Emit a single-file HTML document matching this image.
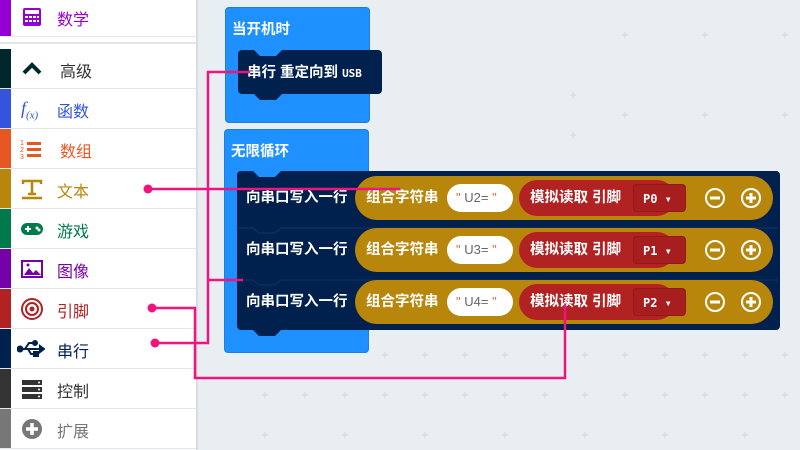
<!DOCTYPE html>
<html><head><meta charset="utf-8"><style>
*{margin:0;padding:0;box-sizing:border-box}
body{width:800px;height:450px;overflow:hidden;position:relative;background:#e9eef2;font-family:"Liberation Sans","Noto Sans CJK SC",sans-serif}
#side{position:absolute;left:0;top:0;width:198px;height:450px;background:#fff;border-right:2px solid #d9dde0}
.row{position:absolute;left:0;width:196px;height:40px;border-bottom:1px solid #e4e7ea;font-size:16px}
.row .c{position:absolute;left:0;top:0;width:11px;height:100%}
.row .t{position:absolute;left:57px;top:9px}
.row .i{position:absolute;left:20px;top:8px;width:24px;height:24px}
.b{position:absolute;color:#fff;font-weight:bold;font-size:14.5px;line-height:18px}
.blue{background:#1e90ff;border-radius:4px;border:1px solid #1a7fe0}
.pill{position:absolute;border-radius:22px}
.y{background:#b8860b}
.r{background:#b22222}
.w{background:#fff;color:#666;font-weight:normal}
.dd{position:absolute;border:1px solid #8e1a1a;border-radius:4px;background:#a81e1e;width:53px;height:28px}
.mono{font-family:'DejaVu Sans Mono',monospace;font-size:12px}
</style></head><body>
<div id="side">
<div class="row" style="top:-3px;height:40px"><div class="c" style="background:#9400d3"></div>
<svg class="i" viewBox="0 0 24 24"><rect x="3" y="3" width="18" height="18" rx="2" fill="#9400d3"/><rect x="5" y="5" width="14" height="4" fill="#fff"/><g fill="#fff"><rect x="5" y="11" width="3" height="2"/><rect x="9" y="11" width="3" height="2"/><rect x="13" y="11" width="3" height="2"/><rect x="17" y="11" width="2" height="2"/><rect x="5" y="15" width="3" height="2"/><rect x="9" y="15" width="3" height="2"/><rect x="13" y="15" width="3" height="2"/><rect x="17" y="15" width="2" height="2"/></g></svg>
<span class="t" style="color:#9400d3">数学</span></div>
<div style="position:absolute;top:42px;left:0;width:196px;border-top:2px solid #e4e7ea"></div>
<div class="row" style="top:49px"><div class="c" style="background:#00272b"></div><svg class="i" viewBox="0 0 24 24"><path d="M4 16l8-8 8 8" stroke="#00272b" stroke-width="4" fill="none"/></svg><span class="t" style="color:#333;left:60px">高级</span></div>
<div class="row" style="top:89px"><div class="c" style="background:#3455db"></div><span style="position:absolute;left:21px;top:9px;color:#3455db;font-style:italic;font-family:'Liberation Serif',serif;font-size:18px">f<sub style="font-size:11px">(x)</sub></span><span class="t" style="color:#3455db">函数</span></div>
<div class="row" style="top:129px"><div class="c" style="background:#e65722"></div><svg class="i" viewBox="0 0 24 24"><g fill="#e65722"><text x="0" y="8" font-size="7" font-family="Liberation Sans">1</text><text x="0" y="15" font-size="7" font-family="Liberation Sans">2</text><text x="0" y="22" font-size="7" font-family="Liberation Sans">3</text><rect x="7" y="5" width="14" height="3"/><rect x="7" y="11" width="14" height="3"/><rect x="7" y="17" width="14" height="3"/></g></svg><span class="t" style="color:#e65722;left:60px">数组</span></div>
<div class="row" style="top:169px"><div class="c" style="background:#b8860b"></div><svg class="i" viewBox="0 0 24 24"><g stroke="#b8860b" stroke-width="2.5" fill="none"><path d="M3 7V4h18v3M12 4v13M8 17h8M2 21h20"/></g></svg><span class="t" style="color:#b8860b">文本</span></div>
<div class="row" style="top:209px"><div class="c" style="background:#007a4b"></div><svg class="i" viewBox="0 0 24 24"><rect x="1" y="6" width="22" height="12" rx="6" fill="#007a4b"/><circle cx="17" cy="11" r="1.5" fill="#fff"/><circle cx="19" cy="13" r="1.5" fill="#fff"/><rect x="5" y="11" width="6" height="2" fill="#fff"/><rect x="7" y="9" width="2" height="6" fill="#fff"/></svg><span class="t" style="color:#007a4b">游戏</span></div>
<div class="row" style="top:249px"><div class="c" style="background:#7600a8"></div><svg class="i" viewBox="0 0 24 24"><rect x="2" y="4" width="20" height="16" fill="none" stroke="#7600a8" stroke-width="2"/><path d="M4 18l5-7 4 5 3-3 5 5z" fill="#7600a8"/><circle cx="8" cy="8" r="1.5" fill="#7600a8"/></svg><span class="t" style="color:#7600a8">图像</span></div>
<div class="row" style="top:289px"><div class="c" style="background:#b22222"></div><svg class="i" viewBox="0 0 24 24"><g fill="none" stroke="#b22222" stroke-width="2"><circle cx="12" cy="12" r="10"/><circle cx="12" cy="12" r="6"/></g><circle cx="12" cy="12" r="2.5" fill="#b22222"/></svg><span class="t" style="color:#b22222">引脚</span></div>
<div class="row" style="top:329px"><div class="c" style="background:#002050"></div><svg class="i" viewBox="0 0 28 24" style="left:17px;width:28px"><g stroke="#002050" stroke-width="2" fill="#002050"><path d="M3 12h22"/><circle cx="3" cy="12" r="2.5"/><path d="M8 12l4-6h5M11 12l3 5h4" fill="none"/><circle cx="18" cy="6" r="2"/><rect x="17" y="15" width="4" height="4"/><path d="M23 9l4 3-4 3z"/></g></svg><span class="t" style="color:#002050">串行</span></div>
<div class="row" style="top:369px"><div class="c" style="background:#333"></div><svg class="i" viewBox="0 0 24 24"><g fill="#333"><rect x="2" y="3" width="20" height="5"/><rect x="2" y="10" width="20" height="5"/><rect x="2" y="17" width="20" height="5"/></g><g fill="#fff"><circle cx="19" cy="5.5" r="1"/><circle cx="19" cy="12.5" r="1"/><circle cx="19" cy="19.5" r="1"/></g></svg><span class="t" style="color:#333">控制</span></div>
<div class="row" style="top:409px"><div class="c" style="background:#777"></div><svg class="i" viewBox="0 0 24 24"><circle cx="12" cy="12" r="10" fill="#777"/><path d="M12 6v12M6 12h12" stroke="#fff" stroke-width="3.5"/></svg><span class="t" style="color:#777">扩展</span></div>
</div>

<svg style="position:absolute;left:200px;top:0" width="600" height="450"><g stroke="#d3d8dc" stroke-width="1">
<path d="M370 95h6M373 92v6M370 135h6M373 132v6M370 175h6M373 172v6"/>
<path d="M62 395h6M65 392v6M102 395h6M105 392v6M142 395h6M145 392v6M182 395h6M185 392v6M222 395h6M225 392v6M262 395h6M265 392v6M302 395h6M305 392v6M342 395h6M345 392v6M382 395h6M385 392v6M422 395h6M425 392v6M462 395h6M465 392v6M502 395h6M505 392v6M542 395h6M545 392v6M582 395h6M585 392v6"/>
<path d="M182 355h6M185 352v6M222 355h6M225 352v6M262 355h6M265 352v6M302 355h6M305 352v6M342 355h6M345 352v6M382 355h6M385 352v6M422 355h6M425 352v6M462 355h6M465 352v6M502 355h6M505 352v6M542 355h6M545 352v6M582 355h6M585 352v6"/>
<path d="M62 435h6M65 432v6M142 435h6M145 432v6M222 435h6M225 432v6M302 435h6M305 432v6M382 435h6M385 432v6M462 435h6M465 432v6M542 435h6M545 432v6"/>
<path d="M422 35h6M425 32v6M502 35h6M505 32v6M582 35h6M585 32v6M422 115h6M425 112v6M502 115h6M505 112v6M582 115h6M585 112v6"/>
</g></svg>

<div class="blue" style="position:absolute;left:225px;top:7px;width:145px;height:116px"></div>
<div class="b" style="left:232px;top:21px">当开机时</div>
<svg style="position:absolute;left:238px;top:50px" width="144" height="52"><path d="M4 0h12l6 6h16l6-6h96a4 4 0 0 1 4 4v36a4 4 0 0 1-4 4H44l-6 6H22l-6-6H4a4 4 0 0 1-4-4V4a4 4 0 0 1 4-4z" fill="#00204e"/></svg>
<div class="b" style="left:247px;top:64px">串行 重定向到 <span class="mono" style="font-size:11px">USB</span></div>

<div class="blue" style="position:absolute;left:224px;top:129px;width:145px;height:224px"></div>
<div class="b" style="left:231px;top:143px">无限循环</div>
<svg style="position:absolute;left:237px;top:171px" width="543" height="166"><path d="M4 0h12l6 6h16l6-6h495a4 4 0 0 1 4 4v151a4 4 0 0 1-4 4H44l-6 6H22l-6-6H4a4 4 0 0 1-4-4V4a4 4 0 0 1 4-4z" fill="#00204e"/><path d="M0 57h16l6 5h16l6-5h497M0 109h16l6 5h16l6-5h497" stroke="#0d2f5e" stroke-width="1.5" fill="none"/></svg>

<div class="b" style="left:246px;top:189px">向串口写入一行</div>
<div class="pill y" style="left:355px;top:176px;width:418px;height:44px"></div>
<div class="b" style="left:366px;top:189px">组合字符串</div>
<div class="pill w b" style="left:447px;top:184px;width:66px;height:28px;padding:5px 0 0 9px;font-size:13px"><span style="color:#e64">"</span> U2= <span style="color:#e64">"</span></div>
<div class="pill r" style="left:519px;top:180px;width:156px;height:36px"></div>
<div class="b" style="left:530px;top:189px">模拟读取 引脚</div>
<div class="dd" style="left:633px;top:184px"></div>
<div class="b mono" style="left:643px;top:190px">P0 ▾</div>
<svg style="position:absolute;left:703px;top:186px" width="60" height="24"><g stroke="#fff" stroke-width="2" fill="none"><circle cx="12" cy="12" r="9"/><circle cx="48" cy="12" r="9"/><path d="M7 12h10M43 12h10M48 7v10" stroke-width="3"/></g></svg>

<div class="b" style="left:246px;top:241px">向串口写入一行</div>
<div class="pill y" style="left:355px;top:228px;width:418px;height:44px"></div>
<div class="b" style="left:366px;top:241px">组合字符串</div>
<div class="pill w b" style="left:447px;top:236px;width:66px;height:28px;padding:5px 0 0 9px;font-size:13px"><span style="color:#e64">"</span> U3= <span style="color:#e64">"</span></div>
<div class="pill r" style="left:519px;top:232px;width:156px;height:36px"></div>
<div class="b" style="left:530px;top:241px">模拟读取 引脚</div>
<div class="dd" style="left:633px;top:236px"></div>
<div class="b mono" style="left:643px;top:242px">P1 ▾</div>
<svg style="position:absolute;left:703px;top:238px" width="60" height="24"><g stroke="#fff" stroke-width="2" fill="none"><circle cx="12" cy="12" r="9"/><circle cx="48" cy="12" r="9"/><path d="M7 12h10M43 12h10M48 7v10" stroke-width="3"/></g></svg>

<div class="b" style="left:246px;top:293px">向串口写入一行</div>
<div class="pill y" style="left:355px;top:280px;width:418px;height:44px"></div>
<div class="b" style="left:366px;top:293px">组合字符串</div>
<div class="pill w b" style="left:447px;top:288px;width:66px;height:28px;padding:5px 0 0 9px;font-size:13px"><span style="color:#e64">"</span> U4= <span style="color:#e64">"</span></div>
<div class="pill r" style="left:519px;top:284px;width:156px;height:36px"></div>
<div class="b" style="left:530px;top:293px">模拟读取 引脚</div>
<div class="dd" style="left:633px;top:288px"></div>
<div class="b mono" style="left:643px;top:294px">P2 ▾</div>
<svg style="position:absolute;left:703px;top:290px" width="60" height="24"><g stroke="#fff" stroke-width="2" fill="none"><circle cx="12" cy="12" r="9"/><circle cx="48" cy="12" r="9"/><path d="M7 12h10M43 12h10M48 7v10" stroke-width="3"/></g></svg>

<svg style="position:absolute;left:0;top:0" width="800" height="450"><g stroke="#f0147f" stroke-width="2.5" fill="none">
<path d="M148 189H400"/>
<path d="M155 343H208V72H250M208 280H243"/>
<path d="M152 308H195V378H565V305"/>
</g><g fill="#f0147f"><circle cx="148" cy="189" r="4.5"/><circle cx="152" cy="308" r="4.5"/><circle cx="155" cy="343" r="4.5"/></g></svg>
</body></html>
